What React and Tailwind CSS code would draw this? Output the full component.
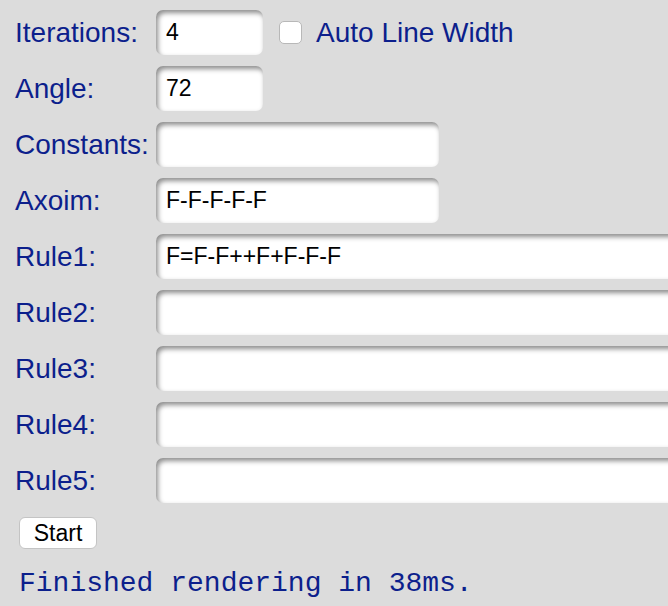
const rows = [
  { label: 'Constants:', value: '', size: 'mid' },
  { label: 'Axoim:', value: 'F-F-F-F-F', size: 'mid' },
  { label: 'Rule1:', value: 'F=F-F++F+F-F-F', size: 'wide' },
  { label: 'Rule2:', value: '', size: 'wide' },
  { label: 'Rule3:', value: '', size: 'wide' },
  { label: 'Rule4:', value: '', size: 'wide' },
  { label: 'Rule5:', value: '', size: 'wide' },
];

const inputBase =
  'h-[45px] rounded-[7px] bg-white pl-[10px] text-[23px] text-black outline-none shadow-[inset_2px_3px_5px_rgba(0,0,0,0.45)] font-["Liberation_Sans",Arial,sans-serif]';

function Field({ value, size }) {
  const width = size === 'small' ? 'w-[107px]' : size === 'mid' ? 'w-[283px]' : 'w-[560px] shrink-0';
  return <input type="text" defaultValue={value} className={`${inputBase} ${width}`} />;
}

function Row({ label, children }) {
  return (
    <div className="flex items-center h-[45px]">
      <label className="w-[141px] shrink-0 text-[28px] leading-none text-[#0c1f8c]">{label}</label>
      {children}
    </div>
  );
}

export default function App() {
  return (
    <div className="w-[668px] h-[606px] overflow-hidden bg-[#dcdcdc] pl-[15px] pt-[10px] font-['Liberation_Sans',Arial,sans-serif]">
      <div className="flex flex-col gap-[11px]">
        <Row label="Iterations:">
          <Field value="4" size="small" />
          <label className="flex items-center ml-[16px] gap-[14px] text-[28px] leading-none text-[#0c1f8c]">
            <span className="w-[23px] h-[23px] rounded-[5px] bg-white border border-[#b8b8b8]" />
            Auto Line Width
          </label>
        </Row>
        <Row label="Angle:">
          <Field value="72" size="small" />
        </Row>
        {rows.map((r) => (
          <Row key={r.label} label={r.label}>
            <Field value={r.value} size={r.size} />
          </Row>
        ))}
      </div>

      <button className="mt-[14px] ml-[4px] w-[78px] h-[32px] rounded-[6px] bg-white border border-[#c4c4c4] text-[23px] leading-none text-black">
        Start
      </button>

      <p className="mt-[21px] ml-[4px] text-[28px] leading-none text-[#0c1f8c] font-['Liberation_Mono','Courier_New',monospace] whitespace-nowrap">
        Finished rendering in 38ms.
      </p>
    </div>
  );
}
